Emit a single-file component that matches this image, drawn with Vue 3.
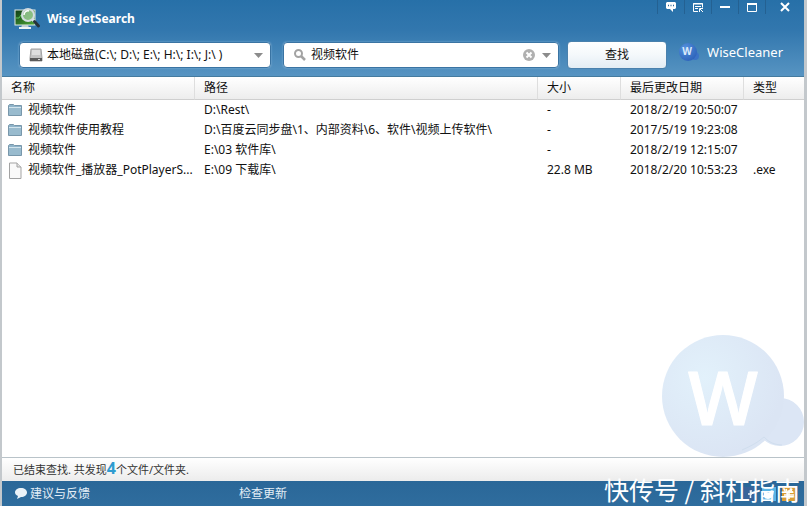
<template>
  <div class="window">
    <header class="top">
      <div class="titlebar">
        <svg class="app-icon" width="28" height="24" viewBox="0 0 28 24">
          <defs>
            <linearGradient id="screen" x1="0" y1="0" x2="1" y2="1">
              <stop offset="0" stop-color="#0d3b16" />
              <stop offset="1" stop-color="#4faa37" />
            </linearGradient>
          </defs>
          <rect x="1" y="3" width="20" height="15" fill="url(#screen)" stroke="#dfe9e4" />
          <path d="M2 11h3l2-3 2 5" fill="none" stroke="#5dc25a" />
          <path d="M8 18h6l1 3H7z" fill="#c3d0d6" />
          <path d="M5 21h12" stroke="#edf3f5" stroke-width="2" />
          <circle cx="14" cy="8" r="6" fill="#9fcf9a" fill-opacity="0.8" stroke="#d3dce0" stroke-width="2" />
          <path d="M10 8a4 4 0 0 1 5-4" fill="none" stroke="#fff" stroke-width="1.5" />
          <path d="M18.500 12.500l2 2" stroke="#dfe6e8" stroke-width="3" />
          <path d="M20.500 14.500l4 4.500" stroke="#26343c" stroke-width="3" stroke-linecap="round" />
        </svg>
        <h1 class="title">Wise JetSearch</h1>
        <div class="win-buttons">
          <button type="button" aria-label="反馈">
            <svg width="12" height="11" viewBox="0 0 12 11">
              <path d="M2 0h8l1 1v5l-1 1H8v3L5 7H2L1 6V1z" fill="#fff" />
              <path d="M3 3.500h1M5.500 3.500h1M8 3.500h1" stroke="#2b6698" stroke-width="1.500" />
            </svg>
          </button>
          <button type="button" aria-label="菜单">
            <svg width="12" height="11" viewBox="0 0 12 11" fill="none" stroke="#fff">
              <path d="M6 9.500H1.500v-8h9v4M1 2h10M3 4.500h6M3 6.500h3" />
              <path d="M7.500 10V6.500H11M8 7l3 3" />
            </svg>
          </button>
          <button type="button" aria-label="最小化">
            <svg width="12" height="11" viewBox="0 0 12 11"><path d="M1 5h10" stroke="#fff" stroke-width="2" /></svg>
          </button>
          <button type="button" aria-label="最大化">
            <svg width="12" height="11" viewBox="0 0 12 11"><path d="M1.500 2v7.500h9V2" fill="none" stroke="#fff" /><path d="M1 2h10" stroke="#fff" stroke-width="2" /></svg>
          </button>
          <button type="button" class="close" aria-label="关闭">
            <svg width="12" height="11" viewBox="0 0 12 11"><path d="M2 1l8 8M10 1l-8 8" stroke="#fff" stroke-width="2" /></svg>
          </button>
        </div>
      </div>

      <form class="toolbar" @submit.prevent>
        <div class="field drives">
          <svg width="14" height="14" viewBox="0 0 14 14">
            <path d="M2 1h10l1 9v3H1v-3z" fill="#c4c4c4" stroke="#a2a2a2" />
            <path d="M3 2h8v5H3z" fill="#dedede" />
            <path d="M1 10h12v3H1z" fill="#5b5b5b" />
            <path d="M9 11.500h2" stroke="#d5d5d5" />
          </svg>
          <select v-model="drive" aria-label="磁盘">
            <option v-for="d in drives" :key="d" :value="d">{{ d }}</option>
          </select>
          <svg width="9" height="5" viewBox="0 0 9 5"><path d="M0 0h9L4.500 5z" fill="#8c8c8c" /></svg>
        </div>

        <div class="field search">
          <svg width="12" height="12" viewBox="0 0 12 12" fill="none" stroke="#a3a3a3" stroke-width="2">
            <circle cx="4.500" cy="4.500" r="3.500" />
            <path d="M7 7l4 4" stroke-width="2.500" />
          </svg>
          <input v-model="keyword" type="text" aria-label="关键字">
          <button type="button" class="plain" aria-label="清除" @click="keyword = ''">
            <svg width="12" height="12" viewBox="0 0 12 12">
              <circle cx="6" cy="6" r="6" fill="#b0b0b0" />
              <path d="M3.500 3.500l5 5M8.500 3.500l-5 5" stroke="#fff" stroke-width="2" />
            </svg>
          </button>
          <button type="button" class="plain" aria-label="历史记录">
            <svg width="9" height="5" viewBox="0 0 9 5"><path d="M0 0h9L4.500 5z" fill="#8c8c8c" /></svg>
          </button>
        </div>

        <button type="submit" class="find">查找</button>

        <a class="brand" href="#">
          <svg width="22" height="20" viewBox="0 0 22 20">
            <defs>
              <radialGradient id="ball" cx="0.35" cy="0.3" r="0.8">
                <stop offset="0" stop-color="#5592dd" />
                <stop offset="1" stop-color="#2a5fb8" />
              </radialGradient>
            </defs>
            <circle cx="17" cy="14" r="4" fill="#3a72c6" />
            <circle cx="10" cy="10" r="9" fill="url(#ball)" />
            <text x="9" y="13" text-anchor="middle" class="ball-letter">W</text>
          </svg>
          <span>WiseCleaner</span>
        </a>
      </form>
    </header>

    <main class="results">
      <table>
        <colgroup>
          <col class="c-name">
          <col>
          <col class="c-size">
          <col class="c-date">
          <col class="c-type">
        </colgroup>
        <thead>
          <tr>
            <th v-for="c in columns" :key="c">{{ c }}</th>
          </tr>
        </thead>
        <tbody>
          <tr v-for="f in files" :key="f.date">
            <td>
              <div class="name">
                <svg v-if="f.type" width="14" height="17" viewBox="0 0 14 17">
                  <path d="M1.500 1h7.500l4 4v11.500H1.500z" fill="#fafafa" stroke="#a3a3a3" />
                  <path d="M9 1v4h4" fill="#e4e4e4" stroke="#a3a3a3" />
                </svg>
                <svg v-else width="14" height="12" viewBox="0 0 14 12">
                  <path d="M.5 11.500v-10l1-1h4l1 1h7v10z" fill="#8fb4ca" stroke="#7897ab" />
                  <path d="M1 3.500h12" stroke="#d3e5ee" />
                  <path d="M1 4h12v7H1z" fill="#99bbce" />
                </svg>
                <span>{{ f.name }}</span>
              </div>
            </td>
            <td>{{ f.path }}</td>
            <td>{{ f.size }}</td>
            <td>{{ f.date }}</td>
            <td>{{ f.type }}</td>
          </tr>
        </tbody>
      </table>
      <svg class="mascot" width="142" height="123" viewBox="0 0 142 123">
        <defs>
          <radialGradient id="pale" cx="0.35" cy="0.35" r="0.65">
            <stop offset="0" stop-color="#e2f1fb" />
            <stop offset="1" stop-color="#dbe5f4" />
          </radialGradient>
        </defs>
        <circle cx="118" cy="88" r="24" fill="#dce6f5" />
        <circle cx="61" cy="62" r="61" fill="url(#pale)" />
        <path d="M80 116c9-4 15-7 22-13q7 8 18 8" fill="none" stroke="#d0deee" />
        <text x="61" y="91" text-anchor="middle" class="mascot-letter">W</text>
      </svg>
    </main>

    <div class="status">已结束查找. 共发现<b>{{ files.length }}</b>个文件/文件夹.</div>

    <footer class="footer">
      <a class="feedback" href="#">
        <svg width="12" height="11" viewBox="0 0 12 11">
          <path d="M6 0c3.500 0 6 2 6 4.500S9.500 9 6 9L2 11l1-3C1 7 0 6 0 4.500 0 2 2.500 0 6 0z" fill="#eaf2f8" />
        </svg>
        建议与反馈
      </a>
      <a href="#">检查更新</a>
      <div class="social">
        <a href="#" aria-label="Facebook">
          <svg width="14" height="14" viewBox="0 0 14 14"><rect width="14" height="14" fill="#39649a" /><path d="M10 4H8.500v7M6 7h4" fill="none" stroke="#e8eef5" stroke-width="1.500" /></svg>
        </a>
        <a href="#" aria-label="Twitter">
          <svg width="14" height="14" viewBox="0 0 14 14"><rect width="14" height="14" fill="#5ab5e6" /><path d="M2 4l5 2q1-4 5-2-1 8-6 8-3 0-4-2z" fill="#fff" /></svg>
        </a>
        <a href="#" aria-label="微博">
          <svg width="14" height="14" viewBox="0 0 14 14"><rect width="14" height="14" fill="#d99d35" /><path d="M3 5h8M2 8h10M7 3v9M4 2l1 2M10 2L9 4" stroke="#fff" stroke-width="1.500" /></svg>
        </a>
      </div>
    </footer>
    <div class="credit">快传号 / 斜杠指南</div>
  </div>
</template>

<script setup>
import { ref } from 'vue'

const drives = ['本地磁盘(C:\\; D:\\; E:\\; H:\\; I:\\; J:\\ )']
const drive = ref(drives[0])
const keyword = ref('视频软件')

const columns = ['名称', '路径', '大小', '最后更改日期', '类型']
const files = [
  { name: '视频软件', path: 'D:\\Rest\\', size: '-', date: '2018/2/19 20:50:07', type: '' },
  { name: '视频软件使用教程', path: 'D:\\百度云同步盘\\1、内部资料\\6、软件\\视频上传软件\\', size: '-', date: '2017/5/19 19:23:08', type: '' },
  { name: '视频软件', path: 'E:\\03 软件库\\', size: '-', date: '2018/2/19 12:15:07', type: '' },
  { name: '视频软件_播放器_PotPlayerS...', path: 'E:\\09 下载库\\', size: '22.8 MB', date: '2018/2/20 10:53:23', type: '.exe' },
]
</script>

<style>
body { margin: 0; background: #fff; }
</style>

<style scoped>
.window {
  position: relative; box-sizing: border-box; min-height: 100vh;
  display: flex; flex-direction: column;
  border-left: 2px solid #c3c8cc; border-right: 3px solid #c3c8cc;
  font: 12px/20px "Noto Sans", "Noto Sans CJK SC", sans-serif; color: #111;
}
button, input, select { font: inherit; color: inherit; }
a { color: inherit; text-decoration: none; }
svg { display: block; flex: none; }

.top { background: linear-gradient(#2770a8, #3277ae 40%, #5794c2); border-bottom: 1px solid #457b9f; }
.titlebar { display: flex; height: 36px; padding-left: 12px; }
.app-icon { margin-top: 7px; }
.title { flex: 1; margin: 9px 0 0 5px; font-size: 12px; line-height: 20px; font-weight: 700; color: #fff; }
.win-buttons { display: flex; height: 14px; }
.win-buttons button {
  display: flex; align-items: center; justify-content: center;
  width: 27px; padding: 0; border: 0; border-left: 1px solid #246192;
  background: transparent;
}
.win-buttons .close { width: 39px; }

.toolbar { display: flex; align-items: center; padding: 6px 21px 8px 17px; }
.field {
  display: flex; align-items: center; box-sizing: border-box; height: 26px;
  border: 1px solid #3a74a3; border-radius: 4px; background: #fff;
  box-shadow: 0 0 2px #8db9dc;
}
.drives { flex: none; width: 252px; padding: 0 7px 0 9px; }
.drives select {
  flex: 1; min-width: 0; margin-left: 4px; padding: 0; border: 0; outline: 0;
  appearance: none; background: transparent;
}
.search { flex: 1; min-width: 0; margin-left: 12px; padding: 0 7px 0 10px; }
.search input { flex: 1; min-width: 0; margin-left: 5px; padding: 0; border: 0; outline: 0; background: transparent; }
.plain { margin-left: 7px; padding: 0; border: 0; background: transparent; }
.find {
  flex: none; width: 100px; height: 28px; margin: -1px 0 -1px 8px; padding: 0;
  border: 1px solid #4a81ad; border-radius: 4px;
  background: linear-gradient(#fff, #f4f8fb 50%, #e3edf4);
}
.brand { display: flex; align-items: center; margin: 0 0 6px 11px; font-size: 13px; color: #fff; }
.brand span { margin-left: 7px; }
.ball-letter { font: 700 10px "Noto Sans", sans-serif; fill: #dbe9fb; }

.results { position: relative; flex: 1; background: #fff; }
table { width: 100%; table-layout: fixed; border-collapse: separate; border-spacing: 0; }
.c-name { width: 193px; }
.c-size { width: 83px; }
.c-date { width: 123px; }
.c-type { width: 60px; }
th {
  box-sizing: border-box; height: 23px; padding: 0 0 0 9px; text-align: left; font-weight: 400;
  background: linear-gradient(#fff, #ededed);
  border-bottom: 1px solid #cfcfcf; border-right: 1px solid #dedede;
}
th:last-child { border-right: 0; }
td { height: 20px; padding: 0 0 0 9px; white-space: nowrap; }
td:first-child { padding-left: 6px; }
.name { display: flex; align-items: center; height: 20px; }
.name span { margin-left: 6px; }
.mascot { position: absolute; right: 0; bottom: 0; }
.mascot-letter { font: 600 74px "Open Sans", sans-serif; fill: #fff; stroke: #fff; stroke-width: 1px; stroke-linejoin: round; }

.status {
  height: 23px; padding-left: 11px; border-top: 1px solid #b9c3c9;
  background: linear-gradient(#fff, #ececec); font-size: 11px; line-height: 23px; color: #333;
}
.status b { font-size: 16px; line-height: 20px; color: #2f9bd0; }
.footer {
  display: flex; align-items: center; height: 25px; padding: 0 8px 0 13px;
  background: linear-gradient(#2a6798, #2f6d9e); color: #e4eef6;
}
.feedback { display: flex; align-items: center; gap: 3px; width: 224px; }
.social { display: flex; gap: 6px; margin-left: auto; }
.credit {
  position: absolute; right: 4px; bottom: 1px;
  font: 25px/32px "Noto Sans CJK SC", sans-serif; color: #fff;
}
</style>
